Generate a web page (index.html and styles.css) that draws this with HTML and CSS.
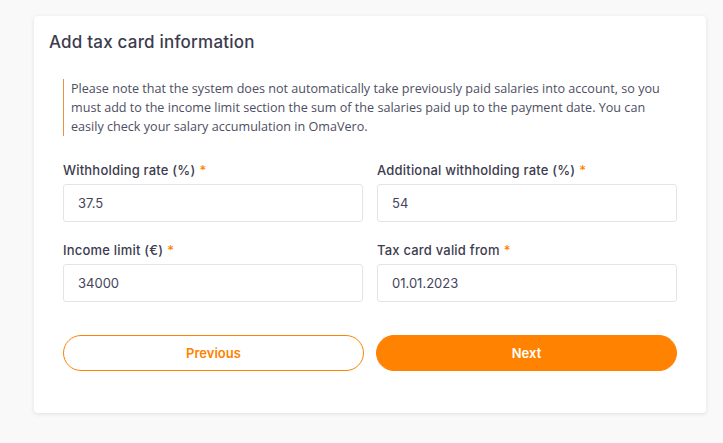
FILE: index.html
```html
<!DOCTYPE html>
<html lang="en">
<head>
<meta charset="utf-8">
<title>Add tax card information</title>
<link rel="stylesheet" href="styles.css">
</head>
<body>
<main class="page">
  <section class="card">
    <h2 class="card-title">Add tax card information</h2>
    <div class="card-body">
      <p class="notice">Please note that the system does not automatically take previously paid salaries into account, so you must add to the income limit section the sum of the salaries paid up to the payment date. You can easily check your salary accumulation in OmaVero.</p>
      <form class="fields">
        <label class="field">
          <span class="field-label">Withholding rate (%)<span class="req">*</span></span>
          <input class="field-input" type="text" value="37.5">
        </label>
        <label class="field">
          <span class="field-label">Additional withholding rate (%)<span class="req">*</span></span>
          <input class="field-input" type="text" value="54">
        </label>
        <label class="field">
          <span class="field-label">Income limit (€)<span class="req">*</span></span>
          <input class="field-input" type="text" value="34000">
        </label>
        <label class="field">
          <span class="field-label">Tax card valid from<span class="req">*</span></span>
          <input class="field-input" type="text" value="01.01.2023">
        </label>
      </form>
      <div class="actions">
        <button class="btn btn-outline" type="button">Previous</button>
        <button class="btn btn-primary" type="button">Next</button>
      </div>
    </div>
  </section>
</main>
</body>
</html>
```

FILE: styles.css
```css
* { box-sizing: border-box; }

html, body {
  margin: 0;
  height: 100%;
}

body {
  background: #f9f9f9;
  font-family: "Open Sans", "Liberation Sans", sans-serif;
  color: #45455a;
}

.page {
  padding: 16px 0 0 34px;
}

.card {
  width: 672px;
  background: #fff;
  border-radius: 4px;
  box-shadow: 0 1px 4px rgba(40, 40, 60, 0.12);
  padding: 16px 29px 42px 15px;
}

.card-title {
  margin: 0;
  font-family: Inter, "Liberation Sans", sans-serif;
  font-size: 17px;
  font-weight: 500;
  letter-spacing: 0.2px;
  line-height: 20px;
  color: #3c3c4e;
}

.card-body {
  padding-left: 14px;
  margin-top: 27px;
}

.notice {
  margin: 0;
  border-left: 1px solid #e8943f;
  padding: 0 12px 0 7px;
  font-size: 12.6px;
  line-height: 19px;
  color: #4e4e62;
}

.fields {
  margin-top: 26px;
  display: grid;
  grid-template-columns: 1fr 1fr;
  column-gap: 14px;
  row-gap: 20px;
}

.field {
  display: flex;
  flex-direction: column;
  gap: 6px;
}

.field-label {
  font-family: Inter, "Liberation Sans", sans-serif;
  font-size: 13px;
  font-weight: 500;
  letter-spacing: 0.2px;
  line-height: 16px;
  color: #3c3c4e;
}

.req {
  color: #ff8200;
  margin-left: 4px;
}

.field-input {
  height: 38px;
  border: 1px solid #e4e4e8;
  border-radius: 3px;
  padding: 0 14px;
  font-family: Inter, "Liberation Sans", sans-serif;
  font-size: 13px;
  color: #45455a;
  background: #fff;
  outline: none;
}

.actions {
  margin-top: 33px;
  display: grid;
  grid-template-columns: 1fr 1fr;
  column-gap: 12px;
}

.btn {
  height: 36px;
  border-radius: 18px;
  font-family: Inter, "Liberation Sans", sans-serif;
  font-size: 13px;
  font-weight: 600;
  cursor: pointer;
}

.btn-outline {
  background: #fff;
  border: 1px solid #ff8200;
  color: #ff8200;
}

.btn-primary {
  background: #ff8200;
  border: 1px solid #ff8200;
  color: #fff;
}
```
